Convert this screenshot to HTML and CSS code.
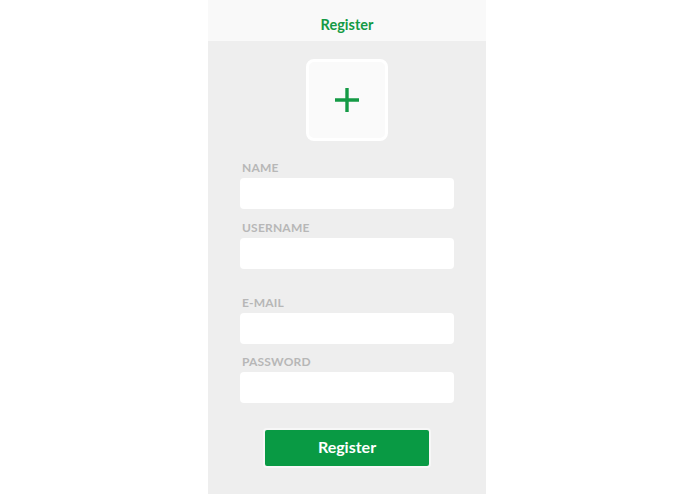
FILE: index.html
```html
<!DOCTYPE html>
<html>
<head>
<meta charset="utf-8">
<link rel="stylesheet" href="styles.css">
</head>
<body>
<div class="panel">
  <header class="header">Register</header>
  <main class="content">
    <div class="photo">
      <svg width="24" height="24" viewBox="0 0 24 24"><path d="M12 0V24M0 12H24" stroke="#149a45" stroke-width="3.4"/></svg>
    </div>
    <form class="form">
      <label class="label">NAME</label>
      <div class="input"></div>
      <label class="label">USERNAME</label>
      <div class="input"></div>
      <label class="label gap">E-MAIL</label>
      <div class="input"></div>
      <label class="label tight">PASSWORD</label>
      <div class="input"></div>
      <div class="btnwrap"><div class="btn">Register</div></div>
    </form>
  </main>
</div>
</body>
</html>
```
FILE: styles.css
```css
html, body { margin: 0; padding: 0; background: #fff; }
body { font-family: Lato, "Noto Sans", sans-serif; }
.panel { width: 278px; margin-left: 208px; height: 494px; background: #eeeeee; display: flex; flex-direction: column; }
.header { height: 41px; background: #f9f9f9; color: #149a45; font-weight: 700; font-size: 14.5px; display: flex; align-items: center; justify-content: center; padding-top: 8px; box-sizing: border-box; }
.content { display: flex; flex-direction: column; align-items: center; padding-top: 18px; }
.photo { width: 76px; height: 76px; background: #fafafa; border: 3px solid #fff; border-radius: 8px; display: flex; align-items: center; justify-content: center; }
.form { width: 214px; display: flex; flex-direction: column; margin-top: 20px; }
.label { color: #b7b7b7; font-weight: 700; font-size: 12px; letter-spacing: 0.2px; line-height: 14px; padding-left: 2px; height: 14px; margin-bottom: 3px; }
.label.gap { margin-top: 15px; }
.label.tight { margin-top: -1px; }
.input { height: 31px; background: #fff; border-radius: 4px; margin-bottom: 12px; }
.btnwrap { display: flex; justify-content: center; margin-top: 13px; }
.btn { width: 164px; height: 36px; background: #099a44; border: 2px solid #f7f7f7; border-radius: 4px; color: #fff; font-weight: 700; font-size: 16px; display: flex; align-items: center; justify-content: center; padding-bottom: 3px; box-sizing: content-box; height: 33px; }
```
